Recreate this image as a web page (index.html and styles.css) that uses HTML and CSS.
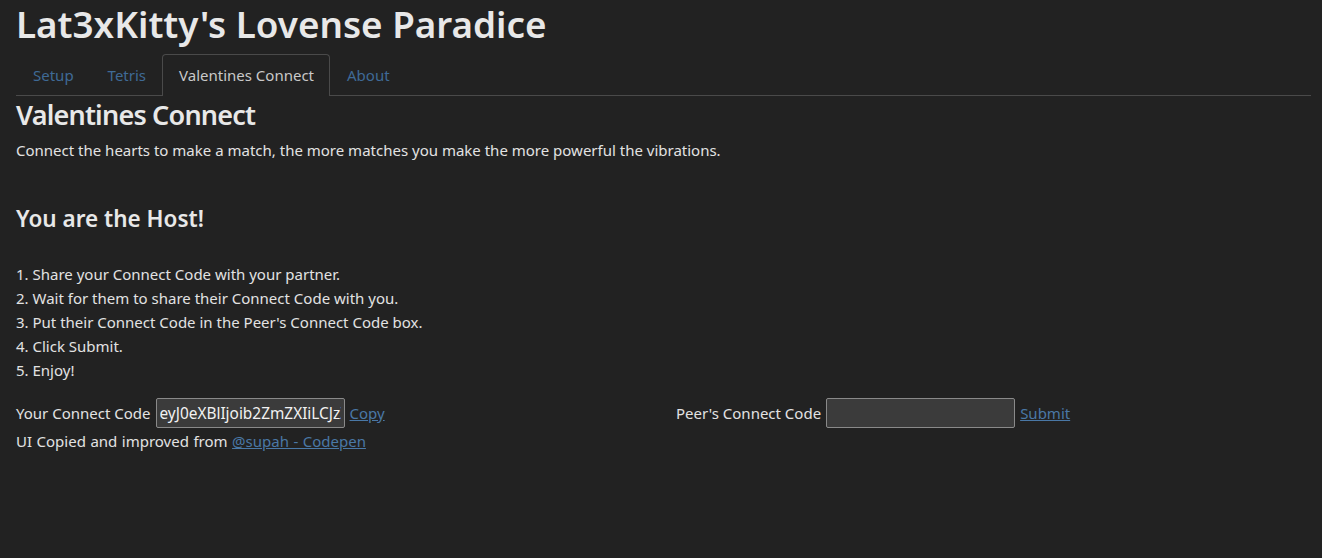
FILE: index.html
```html
<!DOCTYPE html>
<html lang="en">
<head>
<meta charset="utf-8">
<title>Lat3xKitty's Lovense Paradice</title>
<link rel="stylesheet" href="styles.css">
</head>
<body>
<div class="page">
  <h1 class="title">Lat3xKitty's Lovense Paradice</h1>
  <nav class="tabs">
    <a class="tab" href="#">Setup</a>
    <a class="tab tab-tight" href="#">Tetris</a>
    <a class="tab active" href="#">Valentines Connect</a>
    <a class="tab" href="#">About</a>
  </nav>
  <section class="panel">
    <h2 class="panel-title">Valentines Connect</h2>
    <p class="intro">Connect the hearts to make a match, the more matches you make the more powerful the vibrations.</p>
    <h3 class="host">You are the Host!</h3>
    <ol class="steps">
      <li>1. Share your Connect Code with your partner.</li>
      <li>2. Wait for them to share their Connect Code with you.</li>
      <li>3. Put their Connect Code in the Peer's Connect Code box.</li>
      <li>4. Click Submit.</li>
      <li>5. Enjoy!</li>
    </ol>
    <div class="codes">
      <div class="code-field">
        <label class="code-label">Your Connect Code</label>
        <input class="code-input" type="text" value="eyJ0eXBlIjoib2ZmZXIiLCJzZHAiOiJ2PTBcclxubz0tIDQ" readonly>
        <a class="link" href="#">Copy</a>
      </div>
      <div class="code-field">
        <label class="code-label">Peer's Connect Code</label>
        <input class="code-input" type="text" value="">
        <a class="link" href="#">Submit</a>
      </div>
    </div>
    <p class="credit">UI Copied and improved from <a class="link" href="#">@supah - Codepen</a></p>
  </section>
</div>
</body>
</html>
```
FILE: styles.css
```css
html, body {
  margin: 0;
  background: #222222;
}
body {
  font-family: "Noto Sans", "Open Sans", sans-serif;
  font-size: 15px;
  line-height: 24px;
  color: #e2e2e2;
}
.page {
  padding: 0 11px 0 16px;
}
.title {
  margin: 0;
  padding-top: 2px;
  height: 52px;
  font-size: 36.8px;
  line-height: 44px;
  font-weight: 600;
  color: #e8e8e8;
}
.tabs {
  display: flex;
  border-bottom: 1px solid #4a4a4a;
  height: 41px;
}
.tab {
  display: block;
  padding: 8px 16px;
  border: 1px solid transparent;
  border-bottom: none;
  border-radius: 4px 4px 0 0;
  color: #3f6a96;
  text-decoration: none;
  line-height: 24px;
}
.tab-tight {
  padding-right: 15px;
}
.tab.active {
  color: #c9c9c9;
  border-color: #4a4a4a;
  background: #222222;
  box-sizing: border-box;
  margin-bottom: -1px;
  height: 42px;
  padding-right: 15px;
}
.panel-title {
  margin: 1px 0 0;
  font-size: 27px;
  line-height: 36px;
  font-weight: 600;
  letter-spacing: -0.8px;
  color: #e8e8e8;
}
.intro {
  margin: 5px 0 0;
}
.host {
  margin: 42px 0 0;
  font-size: 22.5px;
  line-height: 30px;
  font-weight: 600;
  color: #e8e8e8;
}
.steps {
  list-style: none;
  margin: 28px 0 0;
  padding: 0;
}
.codes {
  display: grid;
  grid-template-columns: 660px 1fr;
  margin-top: 16px;
}
.code-field {
  display: flex;
  align-items: center;
  gap: 4px;
  height: 30px;
}
.code-label {
  margin-right: 1px;
}
.code-input {
  box-sizing: border-box;
  width: 189px;
  height: 30px;
  padding: 0 3px;
  background: #3b3b3b;
  border: 1px solid #8a8a8a;
  border-radius: 2px;
  color: #f2f2f2;
  font-family: "Noto Sans", "Open Sans", sans-serif;
  font-size: 15.4px;
}
.code-input + .link {
  margin-left: 1px;
}
.link {
  color: #4a78a6;
  text-decoration: underline;
}
.credit {
  margin: 0;
  line-height: 26px;
  word-spacing: 0.6px;
}
```
